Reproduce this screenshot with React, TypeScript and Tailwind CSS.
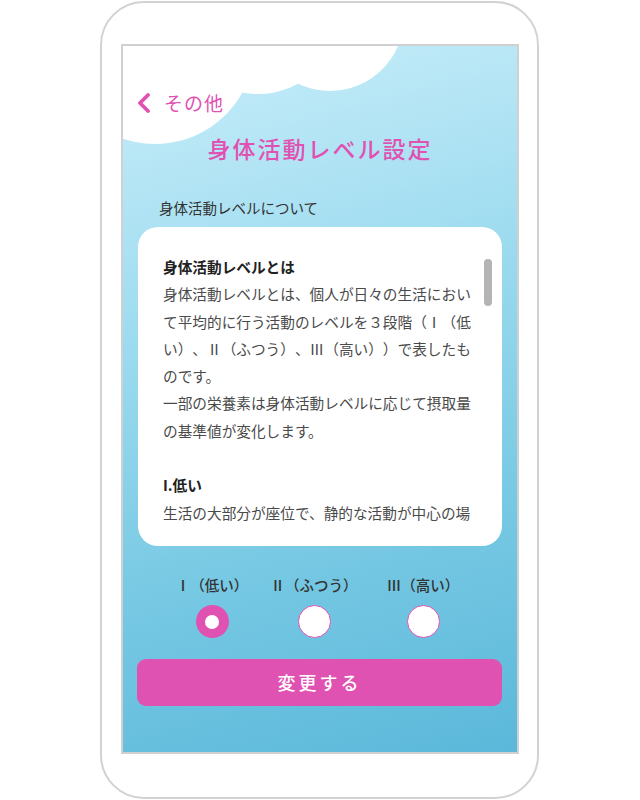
import { useState } from 'react';

const jp = "font-['Noto_Sans_CJK_JP','Noto_Sans',sans-serif]";

const levels = [
  { key: 1, label: 'Ⅰ（低い）', width: 'w-[100px]' },
  { key: 2, label: 'Ⅱ（ふつう）', width: 'w-[104px]' },
  { key: 3, label: 'Ⅲ（高い）', width: 'w-[114px]' },
];

const bodyLines = [
  { text: '身体活動レベルとは', bold: true },
  { text: '身体活動レベルとは、個人が日々の生活におい' },
  { text: 'て平均的に行う活動のレベルを３段階（Ⅰ（低' },
  { text: 'い）、Ⅱ（ふつう）、Ⅲ（高い））で表したも' },
  { text: 'のです。' },
  { text: '一部の栄養素は身体活動レベルに応じて摂取量' },
  { text: 'の基準値が変化します。' },
  { text: '' },
  { text: 'I.低い', bold: true },
  { text: '生活の大部分が座位で、静的な活動が中心の場' },
  { text: '合' },
  { text: '' },
  { text: 'II.ふつう', bold: true },
  { text: '座位中心の仕事だが、職場内での移動や立位で' },
  { text: 'の作業・接客等、通勤・買い物での歩行、家事' },
  { text: '、軽いスポーツ、のいずれかを含む場合' },
];

function Cloud() {
  return (
    <svg className="absolute left-0 top-0" width="398" height="110" viewBox="0 0 398 110">
      <circle cx="32" cy="-2" r="100" fill="#fff" />
      <circle cx="135" cy="-36" r="84" fill="#fff" />
      <circle cx="207" cy="-29" r="74" fill="#fff" />
    </svg>
  );
}

export default function App() {
  const [level, setLevel] = useState(1);

  return (
    <div className={`w-[640px] h-[800px] bg-white [text-spacing-trim:space-all] ${jp}`}>
      <div className="ml-[100px] pt-[1px]">
        <div className="w-[439px] h-[798px] rounded-[44px] border-2 border-[#d2d2d2] bg-white pl-[19px] pt-[41px]">
          <div className="relative w-[398px] h-[710px] border-2 border-[#d0d0d0] overflow-hidden bg-[linear-gradient(165deg,#c9eefa_0%,#9fdcf0_35%,#76c8e3_70%,#5bb8da_100%)]">
            <Cloud />

            <div className="relative flex flex-col">
              {/* back link */}
              <div className="mt-[47px] ml-[14px] flex items-center h-[20px]">
                <svg width="14" height="20" viewBox="0 0 14 20">
                  <path d="M11 2 L3 10 L11 18" fill="none" stroke="#e052b2" strokeWidth="3.8" strokeLinecap="round" strokeLinejoin="round" />
                </svg>
                <span className="ml-[13px] text-[19px] leading-[20px] tracking-[1px] text-[#e052b2]">その他</span>
              </div>

              <h1 className="mt-[20px] text-center text-[23px] leading-[30px] tracking-[2px] font-medium text-[#e052b2]">
                身体活動レベル設定
              </h1>

              <p className="mt-[35px] ml-[36px] text-[14.5px] leading-[20px] text-[#333]">身体活動レベルについて</p>

              {/* explanation card */}
              <div className="relative mt-[9px] ml-[15px] w-[364px] h-[319px] rounded-[20px] bg-white pt-[26px] pl-[25px]">
                <div className="h-[274px] w-[315px] overflow-hidden text-[14.67px] leading-[27.3px] text-[#4a4a4a]">
                  {bodyLines.map((line, i) => (
                    <div key={i} className={line.bold ? 'font-bold text-[#222]' : ''}>
                      {line.text || '\u00a0'}
                    </div>
                  ))}
                </div>
                <div className="absolute right-[10px] top-[32px] w-[8px] h-[47px] rounded-full bg-[#b4b4b4]" />
              </div>

              {/* level choice */}
              <div className="mt-[29px] ml-[39px] flex">
                {levels.map((lv) => (
                  <div key={lv.key} className={`${lv.width} flex flex-col items-center`}>
                    <span className="text-[14.5px] leading-[20px] font-medium text-[#333]">{lv.label}</span>
                    <button
                      onClick={() => setLevel(lv.key)}
                      className={`mt-[10px] w-[33px] h-[33px] rounded-full flex items-center justify-center ${
                        level === lv.key ? 'bg-[#e052b2]' : 'bg-white border-[1.5px] border-[#e052b2]'
                      }`}
                    >
                      {level === lv.key && <span className="w-[14px] h-[14px] rounded-full bg-white" />}
                    </button>
                  </div>
                ))}
              </div>

              <button className="mt-[21px] ml-[14px] w-[365px] h-[47px] rounded-[9px] bg-[#e052b2] text-white text-[18px] leading-[47px] tracking-[3px] font-medium">
                変更する
              </button>
            </div>
          </div>
        </div>
      </div>
    </div>
  );
}
